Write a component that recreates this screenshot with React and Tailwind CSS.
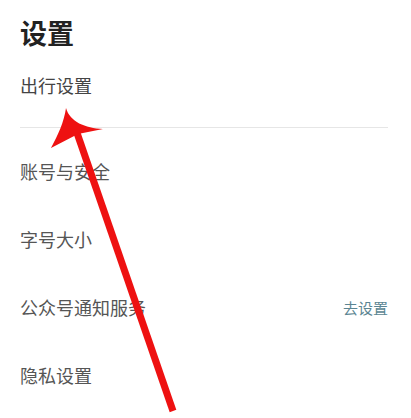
export default function App() {
  const rows = ["账号与安全", "字号大小", "公众号通知服务", "隐私设置"];
  return (
    <div
      className="relative w-[411px] h-[418px] overflow-hidden bg-white"
      style={{ fontFamily: '"Noto Sans CJK SC", "Noto Sans", sans-serif' }}
    >
      <div className="px-5">
        {/* header */}
        <h1 className="pt-[19px] text-[27px] leading-[28px] font-bold text-[#222]">设置</h1>
        <div className="mt-[29px] text-[18px] leading-[18px] text-[#444]">出行设置</div>
        <div className="mt-[33px] h-px bg-[#e6e6e6] mr-[3px]" />
        {/* list */}
        <div className="mt-[9px] flex flex-col">
          {rows.map((r) => (
            <div key={r} className="h-[68px] flex items-center justify-between">
              <span className="text-[18px] leading-[18px] text-[#555]">{r}</span>
              {r === "公众号通知服务" && (
                <span className="text-[15px] leading-[15px] text-[#5b8592] mr-[3px]">去设置</span>
              )}
            </div>
          ))}
        </div>
      </div>
      {/* red arrow annotation */}
      <svg className="absolute inset-0 pointer-events-none" width="411" height="418" viewBox="0 0 411 418">
        <line x1="76" y1="130" x2="173" y2="411" stroke="#ee1111" strokeWidth="7" />
        <path
          d="M66 108 C70 122 85 128 103 129 L78 134 L51 148 C58 135 64 122 66 108 Z"
          fill="#ee1111"
        />
      </svg>
    </div>
  );
}
